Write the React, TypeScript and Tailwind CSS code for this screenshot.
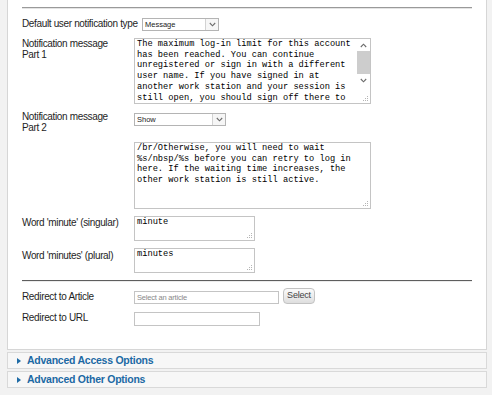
import React from "react";

const sans = "font-['Liberation_Sans',Arial,sans-serif]";
const mono = "font-['Liberation_Mono','Courier_New',monospace]";

const Grip = () => (
  <svg className="absolute right-[1px] bottom-[1px]" width="7" height="7" viewBox="0 0 7 7">
    <rect x="5" y="1" width="1" height="1" fill="#b5b5b5" />
    <rect x="3" y="3" width="1" height="1" fill="#b5b5b5" />
    <rect x="5" y="3" width="1" height="1" fill="#b5b5b5" />
    <rect x="1" y="5" width="1" height="1" fill="#b5b5b5" />
    <rect x="3" y="5" width="1" height="1" fill="#b5b5b5" />
    <rect x="5" y="5" width="1" height="1" fill="#b5b5b5" />
  </svg>
);

const Chevron = ({ up = false }: { up?: boolean }) => (
  <svg width="7" height="5" viewBox="0 0 7 5">
    <path
      d={up ? "M0.8 4 L3.5 1.2 L6.2 4" : "M0.8 1 L3.5 3.8 L6.2 1"}
      fill="none"
      stroke="#6b6b6b"
      strokeWidth="1.1"
    />
  </svg>
);

const Select = ({ value, w }: { value: string; w: string }) => (
  <div className={`${w} h-[13px] border border-[#b4b4b4] bg-white flex items-center`}>
    <span className={`flex-1 pl-[2px] text-[7.5px] leading-[11px] text-[#222] ${sans}`}>{value}</span>
    <div className="w-[13px] h-[11px] border-l border-[#d2d2d2] bg-[#f6f6f6] flex items-center justify-center">
      <Chevron />
    </div>
  </div>
);

const TextArea = ({
  lines,
  w,
  h,
  scroll = false,
}: {
  lines: string[];
  w: string;
  h: string;
  scroll?: boolean;
}) => (
  <div className={`relative ${w} ${h} border border-[#c4c4c4] bg-white flex overflow-hidden`}>
    <div className={`flex-1 pl-[2px] text-[8.7px] leading-[10.7px] text-black ${mono}`}>
      {lines.map((l, i) => (
        <div key={i} className="whitespace-pre">
          {l}
        </div>
      ))}
    </div>
    {scroll && (
      <div className="w-[13px] flex flex-col items-center pb-[9px]">
        <div className="h-[12px] flex items-center justify-center">
          <Chevron up />
        </div>
        <div className="w-[13px] h-[23px] bg-[#cdcdcd]" />
        <div className="h-[13px] flex items-center justify-center">
          <Chevron />
        </div>
      </div>
    )}
    <Grip />
  </div>
);

const Label = ({ children, cls = "" }: { children: React.ReactNode; cls?: string }) => (
  <div className={`w-[112px] shrink-0 text-[10px] leading-[11px] tracking-[-0.35px] text-[#1e1e1e] ${sans} ${cls}`}>
    {children}
  </div>
);

const Accordion = ({ title }: { title: string }) => (
  <div className="mt-[2px] ml-[7px] w-[480px] h-[17px] border border-[#d9d9d9] bg-[#f7f7f7] flex items-center pl-[9px]">
    <svg width="4" height="6" viewBox="0 0 4 6" className="mr-[6px]">
      <path d="M0 0 L4 3 L0 6 Z" fill="#1f6ba6" />
    </svg>
    <span className={`text-[10.5px] font-bold tracking-[-0.25px] text-[#1c69a4] ${sans}`}>{title}</span>
  </div>
);

export default function App() {
  return (
    <div className="w-[492px] h-[395px] bg-[#f2f2f2] overflow-hidden">
      <div className="ml-[7px] w-[480px] h-[350px] bg-white border-x border-b border-[#d6d6d6] px-[14px] pt-[7px]">
        <div className="h-[2px] border-t border-[#9a9a9a] border-b border-b-[#e4e4e4]" />

        {/* Default user notification type */}
        <div className="mt-[8px] flex items-start">
          <div className={`w-[120px] shrink-0 whitespace-nowrap text-[10px] leading-[11px] tracking-[-0.35px] text-[#1e1e1e] ${sans} mt-[1px]`}>
            Default user notification type
          </div>
          <div className="mt-[1px]">
            <Select value="Message" w="w-[77px]" />
          </div>
        </div>

        {/* Part 1 */}
        <div className="mt-[7px] flex items-start">
          <Label>
            Notification message
            <br />
            Part 1
          </Label>
          <TextArea
            w="w-[237px]"
            h="h-[66px]"
            scroll
            lines={[
              "The maximum log-in limit for this account",
              "has been reached. You can continue",
              "unregistered or sign in with a different",
              "user name. If you have signed in at",
              "another work station and your session is",
              "still open, you should sign off there to",
            ]}
          />
        </div>

        {/* Part 2 */}
        <div className="mt-[7px] flex items-start">
          <Label>
            Notification message
            <br />
            Part 2
          </Label>
          <div className="flex flex-col">
            <div className="mt-[2px]">
              <Select value="Show" w="w-[92px]" />
            </div>
            <div className="mt-[16px]">
              <TextArea
                w="w-[237px]"
                h="h-[67px]"
                lines={[
                  "/br/Otherwise, you will need to wait",
                  "%s/nbsp/%s before you can retry to log in",
                  "here. If the waiting time increases, the",
                  "other work station is still active.",
                ]}
              />
            </div>
          </div>
        </div>

        {/* minute */}
        <div className="mt-[7px] flex items-start">
          <Label cls="pt-[1px]">Word 'minute' (singular)</Label>
          <TextArea w="w-[121px]" h="h-[25px]" lines={["minute"]} />
        </div>

        {/* minutes */}
        <div className="mt-[7px] flex items-start">
          <Label cls="pt-[2px]">Word 'minutes' (plural)</Label>
          <TextArea w="w-[121px]" h="h-[25px]" lines={["minutes"]} />
        </div>

        <div className="mt-[7px] h-[2px] border-t border-[#5e5e5e] border-b border-b-[#ececec]" />

        {/* Redirect to Article */}
        <div className="mt-[6px] flex items-start">
          <Label cls="mt-[3px]">Redirect to Article</Label>
          <div className="mt-[3px] w-[145px] h-[13px] border border-[#c4c4c4] bg-white flex items-center">
            <span className={`pl-[2px] text-[7.5px] tracking-[-0.2px] text-[#8a8a8a] ${sans}`}>Select an article</span>
          </div>
          <div
            className={`ml-[4px] w-[32px] h-[16px] rounded-[4px] border border-[#c2c2c2] bg-gradient-to-b from-[#fbfbfb] to-[#dedede] flex items-center justify-center text-[9px] tracking-[-0.2px] text-[#444] ${sans}`}
          >
            Select
          </div>
        </div>

        {/* Redirect to URL */}
        <div className="mt-[8px] flex items-start">
          <Label>Redirect to URL</Label>
          <div className="w-[126px] h-[14px] border border-[#c4c4c4] bg-white" />
        </div>
      </div>

      <Accordion title="Advanced Access Options" />
      <Accordion title="Advanced Other Options" />
    </div>
  );
}
